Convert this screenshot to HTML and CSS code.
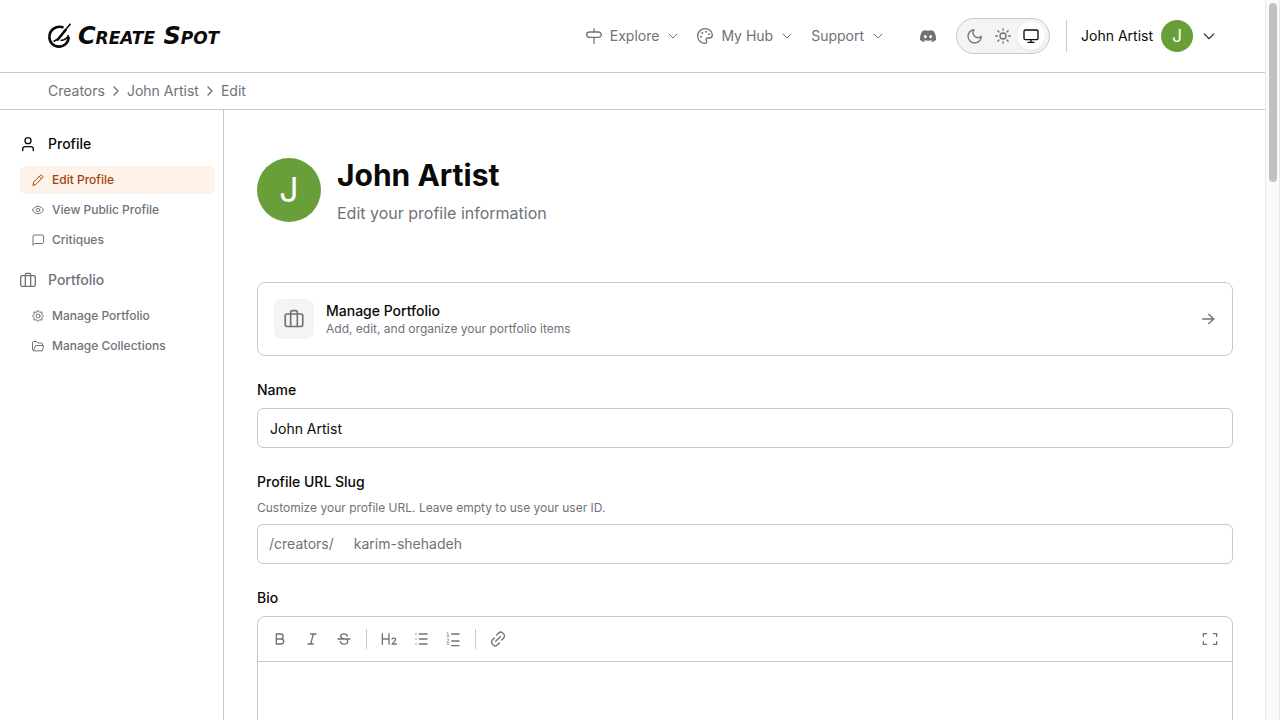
FILE: index.html
```html
<!DOCTYPE html>
<html lang="en">
<head>
  <meta charset="UTF-8">
  <meta name="viewport" content="width=device-width, initial-scale=1.0">
  <title>Edit Profile - Create Spot</title>
  <link rel="stylesheet" href="styles.css">
</head>
<body>
  <div class="page">
    <header class="header">
      <a class="brand" href="#">
        <svg class="brand-mark" viewBox="0 0 24 26" fill="none" stroke="currentColor">
          <path d="M15.500 4.500C8 1.800 1.400 7 1.400 14c0 5.500 4 9.600 9.400 9.600 5.500 0 10-4 9.800-9.800" stroke-width="2.600"/>
          <path d="M22.500 .8 14 11" stroke-width="1.600"/>
          <path d="M18 6.500 9 17.500" stroke-width="2.600"/>
          <path d="M10 16 5.500 18.500" stroke-width="1.600"/>
          <path d="M20.500 12c-1 3-3.500 5-8 5.500" stroke-width="1.600"/>
        </svg>
        <span class="brand-name">Create Spot</span>
      </a>
      <nav class="nav">
        <button class="nav-item" type="button">
          <svg class="icon" viewBox="0 0 24 24"><path d="M12 1.500V6M12 14v9M6 6h12c2.500 0 5 2 5 4s-2.500 4-5 4H6c-3 0-5-2-5-4s2-4 5-4z"/></svg>
          Explore
          <svg class="icon icon-sm" viewBox="0 0 24 24"><path d="m4 8 8 8 8-8"/></svg>
        </button>
        <button class="nav-item" type="button">
          <svg class="icon" viewBox="0 0 24 24"><path d="M12 1a11 11 0 0 0 0 22c1.500 0 2.500-1 2.500-2.500 0-1.500-1-2-1-3.200 0-1.300 1-2.300 2.500-2.300h2.500c2.500 0 4.500-1.700 4.500-4.500C23 5 18 1 12 1z"/><g class="dots"><circle cx="6" cy="13" r="1.500"/><circle cx="8" cy="7.500" r="1.500"/><circle cx="13.500" cy="5.500" r="1.500"/><circle cx="18" cy="9.500" r="1.500"/></g></svg>
          My Hub
          <svg class="icon icon-sm" viewBox="0 0 24 24"><path d="m4 8 8 8 8-8"/></svg>
        </button>
        <button class="nav-item" type="button">
          Support
          <svg class="icon icon-sm" viewBox="0 0 24 24"><path d="m4 8 8 8 8-8"/></svg>
        </button>
      </nav>
      <a class="discord" href="#" aria-label="Discord">
        <svg viewBox="0 0 24 24" fill="currentColor"><path d="M20.317 4.370a19.800 19.800 0 0 0-4.885-1.515c-.3.400-.5.900-.7 1.286a18.300 18.300 0 0 0-5.487 0c-.2-.4-.4-.9-.7-1.286A19.700 19.700 0 0 0 3.660 4.370C.533 9.046-.319 13.580.1 18.058c2.100 1.560 4.100 2.500 6.050 3.085.5-.65.900-1.300 1.300-2.100-.7-.25-1.300-.55-1.950-.95l.5-.4c3.900 1.800 8.180 1.800 12.060 0l.5.4c-.6.400-1.250.7-1.950.95.4.8.8 1.450 1.300 2.100 1.960-.6 3.950-1.520 6.030-3.085.5-5.177-.838-9.674-3.620-13.688zM8.020 15.331c-1.183 0-2.157-1.086-2.157-2.419s.956-2.419 2.157-2.419c1.211 0 2.176 1.095 2.157 2.419 0 1.333-.956 2.419-2.157 2.419zm7.975 0c-1.183 0-2.157-1.086-2.157-2.419s.956-2.419 2.157-2.419c1.211 0 2.176 1.095 2.157 2.419 0 1.333-.946 2.419-2.157 2.419z"/></svg>
      </a>
      <div class="theme-toggle">
        <button type="button" aria-label="Dark"><svg class="icon" viewBox="0 0 24 24"><path d="M10.500 2.500a7.500 7.500 0 0 0 11 10A10 10 0 1 1 10.500 2.500z"/></svg></button>
        <button type="button" aria-label="Light"><svg class="icon" viewBox="0 0 24 24"><circle cx="12" cy="12" r="4.500"/><path d="M12 1v2.500M12 20.500V23M1 12h2.500M20.500 12H23M4.200 4.200 6 6M18 18l1.800 1.800M4.200 19.800 6 18M18 6l1.800-1.800"/></svg></button>
        <button class="active" type="button" aria-label="System"><svg class="icon" viewBox="0 0 24 24"><rect x="1.500" y="3" width="21" height="14.500" rx="2"/><path d="M12 17.500V21M7.500 21.500h9"/></svg></button>
      </div>
      <span class="divider"></span>
      <button class="account" type="button">
        John Artist
        <span class="avatar">J</span>
        <svg class="icon" viewBox="0 0 24 24"><path d="m5 9 7 7 7-7"/></svg>
      </button>
    </header>

    <nav class="breadcrumb" aria-label="Breadcrumb">
      <a href="#">Creators</a>
      <svg class="icon" viewBox="0 0 24 24"><path d="m9 18 6-6-6-6"/></svg>
      <a href="#">John Artist</a>
      <svg class="icon" viewBox="0 0 24 24"><path d="m9 18 6-6-6-6"/></svg>
      <span>Edit</span>
    </nav>

    <div class="layout">
      <aside class="sidebar">
        <a class="group-title current" href="#">
          <svg class="icon" viewBox="0 0 24 24"><circle cx="12" cy="7" r="4.500"/><path d="M4 22v-2c0-2.500 2-4 4-4h8c2 0 4 1.500 4 4v2"/></svg>
          Profile
        </a>
        <ul class="group">
          <li><a class="active" href="#"><svg class="icon icon-sm" viewBox="0 0 24 24"><path d="M2 22l1.500-6L17 2.500c1.500-1.500 6 2.500 4.500 4.500L8 20.500zM14.500 5l4.500 4.500"/></svg>Edit Profile</a></li>
          <li><a href="#"><svg class="icon icon-sm" viewBox="0 0 24 24"><path d="M1 12c5-10 17-10 22 0-5 10-17 10-22 0z"/><circle cx="12" cy="12" r="3.500"/></svg>View Public Profile</a></li>
          <li><a href="#"><svg class="icon icon-sm" viewBox="0 0 24 24"><path d="M2 22V4c0-1 1-2 2-2h17c1 0 2 1 2 2v13c0 1-1 2-2 2H6z"/></svg>Critiques</a></li>
        </ul>
        <a class="group-title" href="#">
          <svg class="icon" viewBox="0 0 24 24"><rect x="1" y="5.500" width="22" height="16" rx="2"/><path d="M8 21.500V4c0-1 1-2 2-2h4c1 0 2 1 2 2v17.500"/></svg>
          Portfolio
        </a>
        <ul class="group">
          <li><a href="#"><svg class="icon icon-sm" viewBox="0 0 24 24"><path d="m12 1 3 3.500 5-.5v5l3 3-3 3v5l-5-.5L12 23l-3-3.500-5 .5v-5l-3-3 3-3V4l5 .5z"/><circle cx="12" cy="12" r="4"/></svg>Manage Portfolio</a></li>
          <li><a href="#"><svg class="icon icon-sm" viewBox="0 0 24 24"><path d="M3 21c-1 0-2-1-2-2V5c0-1 1-2 2-2h6l3 3h7c1 0 2 1 2 2v3M3 21l4-10h16l-2 10z"/></svg>Manage Collections</a></li>
        </ul>
      </aside>

      <main class="content">
        <div class="profile-head">
          <span class="avatar avatar-lg">J</span>
          <div>
            <h1>John Artist</h1>
            <p>Edit your profile information</p>
          </div>
        </div>

        <a class="card" href="#">
          <span class="card-icon"><svg class="icon" viewBox="0 0 24 24"><rect x="1.500" y="6" width="21" height="15" rx="2"/><path d="M8 21V4c0-1 1-2 2-2h4c1 0 2 1 2 2v17"/></svg></span>
          <span class="card-text">
            <strong>Manage Portfolio</strong>
            <small>Add, edit, and organize your portfolio items</small>
          </span>
          <svg class="icon" viewBox="0 0 24 24"><path d="M4 12h17M13 5l7.500 7-7.500 7"/></svg>
        </a>

        <form class="form">
          <div class="field">
            <label for="name">Name</label>
            <input class="input" id="name" type="text" value="John Artist">
          </div>
          <div class="field">
            <label for="slug">Profile URL Slug</label>
            <p class="hint">Customize your profile URL. Leave empty to use your user ID.</p>
            <div class="input slug">
              <span>/creators/</span>
              <input id="slug" type="text" placeholder="karim-shehadeh">
            </div>
          </div>
          <div class="field">
            <label for="bio">Bio</label>
            <div class="editor">
              <div class="toolbar">
                <button type="button" aria-label="Bold"><svg class="icon" viewBox="0 0 24 24"><path d="M6.500 4.500H13a3.700 3.700 0 0 1 0 7.500H6.500zM6.500 12h7.300a3.700 3.700 0 0 1 0 7.500H6.500z"/></svg></button>
                <button type="button" aria-label="Italic"><svg class="icon" viewBox="0 0 24 24"><path d="M10 4.500h8M6 19.500h8M14 4.500l-4 15"/></svg></button>
                <button type="button" aria-label="Strikethrough"><svg class="icon" viewBox="0 0 24 24"><path d="M17 7.500c-.5-2-2.500-3.200-5-3.200-3 0-5 1.500-5 3.700 0 1.500 1 3 5 4M3 12h18M6.500 16c.5 2.300 2.500 3.700 5.500 3.700s5.500-1.500 5.500-4c0-1.500-.5-2.700-2-3.700"/></svg></button>
                <span class="sep"></span>
                <button type="button" aria-label="Heading 2"><svg class="icon" viewBox="0 0 24 24"><path d="M2 4v16M12 4v16M2 12h10M16.500 12c1-2 5.500-2 5.500.8 0 2.200-3.500 3.700-5.500 6.700H23"/></svg></button>
                <button type="button" aria-label="Bullet list"><svg class="icon" viewBox="0 0 24 24"><path d="M9.500 4.500H21M9.500 12H21M9.500 19.500H21"/><path class="thin" d="M3.500 4.500h2M3.500 12h2M3.500 19.500h2"/></svg></button>
                <button type="button" aria-label="Numbered list"><svg class="icon" viewBox="0 0 24 24"><path d="M10 4.500h11M10 15h11M10 22h11"/><path class="thin" d="M3 3h1.500v5M3 8h3M3 12c3-2 4 1 0 5h3M3 20h3"/></svg></button>
                <span class="sep"></span>
                <button type="button" aria-label="Link"><svg class="icon" viewBox="0 0 24 24"><path d="m8.500 15.500 7-7M10 6l3-3c4-4 11.500 3 7.500 7.500l-3 3M6.500 10.500l-3 3C-.5 18 7 25 11 21l3-3"/></svg></button>
                <button class="expand" type="button" aria-label="Fullscreen"><svg class="icon" viewBox="0 0 24 24"><path d="M2 8V4h5M17 4h5v4M22 16v4h-5M7 20H2v-4"/></svg></button>
              </div>
              <textarea id="bio" rows="8"></textarea>
            </div>
          </div>
        </form>
      </main>
    </div>
  </div>
  <div class="scrollbar"><div class="thumb"></div></div>
</body>
</html>
```

FILE: styles.css
```css
* {
  box-sizing: border-box;
}
body {
  margin: 0;
  display: flex;
  height: 100vh;
  overflow: hidden;
  background: #fff;
  color: #0a0a0a;
  font-family: Inter, "Liberation Sans", sans-serif;
  font-size: 14px;
  line-height: 20px;
}
a {
  color: inherit;
  text-decoration: none;
}
button {
  border: 0;
  padding: 0;
  background: none;
  color: inherit;
  font: inherit;
  cursor: pointer;
}
.icon {
  width: 16px;
  height: 16px;
  flex-shrink: 0;
  fill: none;
  stroke: currentColor;
  stroke-width: 2;
  stroke-linecap: round;
  stroke-linejoin: round;
}
.icon-sm {
  width: 12px;
  height: 12px;
}
.page {
  flex: 1;
  min-width: 0;
  display: flex;
  flex-direction: column;
}

/* header */
.header {
  display: flex;
  align-items: center;
  flex-shrink: 0;
  height: 73px;
  padding: 0 48px;
  border-bottom: 1px solid #c8c8cd;
}
.brand {
  display: flex;
  align-items: center;
  gap: 6px;
  margin-right: auto;
}
.brand-mark {
  width: 24px;
  height: 26px;
}
.brand-name {
  font-family: "DejaVu Sans", sans-serif;
  font-size: 24px;
  font-weight: 700;
  font-style: italic;
  font-variant: small-caps;
  line-height: 28px;
}
.nav {
  display: flex;
  gap: 18px;
  margin-right: 36px;
  color: #71717a;
}
.nav-item {
  display: flex;
  align-items: center;
  gap: 8px;
}
.dots {
  fill: currentColor;
  stroke: none;
}
.discord {
  height: 16px;
  margin-right: 20px;
  color: #71717a;
}
.discord svg {
  display: block;
  width: 16px;
  height: 16px;
}
.theme-toggle {
  display: flex;
  padding: 3px 4px;
  border: 1px solid #c8c8cd;
  border-radius: 18px;
  background: #f4f4f5;
  color: #71717a;
}
.theme-toggle button {
  display: flex;
  align-items: center;
  justify-content: center;
  width: 28px;
  height: 28px;
  border-radius: 50%;
}
.theme-toggle .active {
  background: #fff;
  color: #0a0a0a;
  box-shadow: 0 1px 2px rgba(0, 0, 0, 0.08);
}
.divider {
  width: 1px;
  height: 32px;
  margin: 0 14px 0 16px;
  background: #c8c8cd;
}
.account {
  display: flex;
  align-items: center;
  gap: 8px;
}
.account .icon {
  color: #3f3f46;
}
.avatar {
  display: flex;
  align-items: center;
  justify-content: center;
  flex-shrink: 0;
  width: 32px;
  height: 32px;
  border-radius: 50%;
  background: #689f38;
  color: #fff;
  font-size: 17px;
}
.avatar-lg {
  width: 64px;
  height: 64px;
  font-size: 34px;
}

.breadcrumb {
  display: flex;
  align-items: center;
  flex-shrink: 0;
  gap: 3px;
  height: 37px;
  padding: 0 48px;
  border-bottom: 1px solid #c8c8cd;
  color: #71717a;
}

/* sidebar */
.layout {
  display: flex;
  flex: 1;
  min-height: 0;
}
.sidebar {
  width: 224px;
  flex-shrink: 0;
  padding: 16px 8px 0 20px;
  border-right: 1px solid #c8c8cd;
  color: #71717a;
  font-weight: 500;
}
.group-title {
  display: flex;
  align-items: center;
  gap: 12px;
  height: 36px;
}
.group-title.current {
  color: #0a0a0a;
}
.group {
  display: flex;
  flex-direction: column;
  gap: 2px;
  margin: 4px 0 8px;
  padding: 0;
  list-style: none;
  font-size: 12px;
}
.group a {
  display: flex;
  align-items: center;
  gap: 8px;
  height: 28px;
  padding: 0 12px;
  border-radius: 6px;
}
.group .active {
  background: #fef3eb;
  color: #a3420c;
}

/* content */
.content {
  flex: 1;
  min-width: 0;
  padding: 48px 32px 0 33px;
  overflow: hidden;
}
.profile-head {
  display: flex;
  align-items: flex-start;
  gap: 16px;
  margin-bottom: 56px;
}
.profile-head h1 {
  margin: 0 0 8px;
  font-size: 30px;
  line-height: 34px;
}
.profile-head p {
  margin: 0;
  color: #71717a;
  font-size: 16px;
  line-height: 26px;
}
.card {
  display: flex;
  align-items: center;
  gap: 12px;
  padding: 16px;
  border: 1px solid #c8c8cd;
  border-radius: 8px;
  color: #71717a;
}
.card-icon {
  display: flex;
  align-items: center;
  justify-content: center;
  width: 40px;
  height: 40px;
  border-radius: 8px;
  background: #f4f4f5;
}
.card-icon .icon {
  width: 20px;
  height: 20px;
}
.card-text {
  display: flex;
  flex-direction: column;
  flex: 1;
}
.card strong {
  color: #0a0a0a;
  font-weight: 500;
}
.card small {
  font-size: 12px;
  line-height: 16px;
}
.form {
  display: flex;
  flex-direction: column;
  gap: 24px;
  margin-top: 24px;
}
.field label {
  display: block;
  margin-bottom: 8px;
  font-weight: 500;
}
.hint {
  margin: 0 0 8px;
  color: #71717a;
  font-size: 12px;
  line-height: 16px;
}
.input {
  display: block;
  width: 100%;
  height: 40px;
  padding: 0 12px;
  border: 1px solid #c8c8cd;
  border-radius: 6px;
  background: #fff;
  color: #0a0a0a;
  font: inherit;
}
.slug {
  display: flex;
  align-items: center;
  gap: 20px;
  padding: 0 11px;
  color: #71717a;
}
.slug input {
  flex: 1;
  border: 0;
  padding: 0;
  outline: 0;
  font: inherit;
}
.slug input::placeholder {
  color: #71717a;
}
.editor {
  border: 1px solid #c8c8cd;
  border-radius: 8px;
}
.toolbar {
  display: flex;
  align-items: center;
  gap: 4px;
  padding: 8px;
  border-bottom: 1px solid #c8c8cd;
  color: #71717a;
}
.toolbar button {
  display: flex;
  align-items: center;
  justify-content: center;
  width: 28px;
  height: 28px;
}
.toolbar .sep {
  width: 1px;
  height: 20px;
  margin: 0 4px;
  background: #c8c8cd;
}
.toolbar .expand {
  margin-left: auto;
}
.thin {
  stroke-width: 1;
}
.editor textarea {
  display: block;
  width: 100%;
  padding: 12px;
  border: 0;
  outline: 0;
  background: none;
  font: inherit;
  resize: none;
}

.scrollbar {
  width: 15px;
  flex-shrink: 0;
  padding: 3px 2px 0 3px;
  border: solid #e8e8e8;
  border-width: 0 1px;
  background: #fafafa;
}
.thumb {
  height: 25%;
  border-radius: 4px;
  background: #c1c1c1;
}
```
